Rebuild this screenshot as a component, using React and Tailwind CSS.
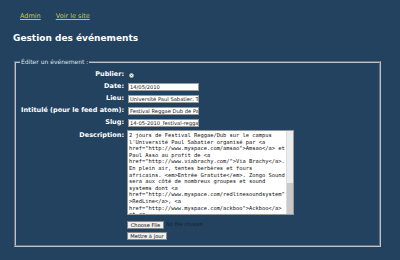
import React from 'react';

const rows = [
   { label: 'Date:', value: '14/05/2010' },
   { label: 'Lieu:', value: 'Université Paul Sabatier, Toulouse' },
   { label: 'Intitulé (pour le feed atom):', value: 'Festival Reggae Dub de Paul Asso' },
   { label: 'Slug:', value: '14-05-2010_festival-reggae-dub' },
];

const description = [
   '2 jours de Festival Reggae/Dub sur le campus',
   "l'Université Paul Sabatier organisé par <a",
   'href="http://www.myspace.com/amsao">Amsao</a> et',
   'Paul Asso au profit de <a',
   'href="http://www.viabrachy.com/">Via Brachy</a>.',
   'En plein air, tentes berbères et fours',
   'africains. <em>Entrée Gratuite</em>. Zongo Sound',
   'sera aux côté de nombreux groupes et sound',
   'systems dont <a',
   'href="http://www.myspace.com/redlinesoundsystem"',
   '>RedLine</a>, <a',
   'href="http://www.myspace.com/ackboo">Ackboo</a>',
   'et <a',
];

const App = () => {
   return (
      <div className="min-h-screen w-full bg-[#234260] font-['DejaVu_Sans',sans-serif] text-white">
         <div className="flex gap-[15px] pl-[20px] pt-[12px] text-[6.5px] leading-[8px]">
            <a href="#" className="text-[#c9c93a] underline">Admin</a>
            <a href="#" className="text-[#c9c93a] underline">Voir le site</a>
         </div>

         <h1 className="mt-[12px] pl-[13px] text-[9px] leading-[12px] font-bold">Gestion des événements</h1>

         <fieldset className="mt-[14px] ml-[14px] w-[367px] border-2 [border-style:groove] border-[#b9c3cd] pb-[5px]">
            <legend className="ml-[4px] px-[1px] text-[6px] leading-[8px] text-[#dde3e9]">Éditer un événement :</legend>

            <div className="flex flex-col pt-[3px]">
               <div className="flex h-[12px] items-center">
                  <span className="w-[108px] text-right text-[6.5px] font-bold">Publier:</span>
                  <span className="ml-[5px] flex h-[5px] w-[5px] items-center justify-center rounded-full border border-[#9aa] bg-[#f4f4f4]">
                     <span className="h-[1px] w-[1px] bg-[#666]" />
                  </span>
               </div>

               {rows.map(row => (
                  <div key={row.label} className="flex h-[12px] items-center">
                     <span className="w-[108px] text-right text-[6.5px] font-bold whitespace-nowrap">{row.label}</span>
                     <div className="ml-[4px] h-[8px] w-[71px] overflow-hidden border border-[#999] bg-white pl-[1px] text-[5.2px] leading-[6px] whitespace-nowrap text-[#222]">
                        {row.value}
                     </div>
                  </div>
               ))}

               <div className="mt-[1px] flex">
                  <span className="w-[108px] pt-[1px] text-right text-[6.5px] leading-[8px] font-bold">Description:</span>
                  <div className="ml-[3px] flex h-[85px] w-[167px] border border-[#999] bg-white">
                     <div className="flex-1 overflow-hidden pl-[1px] pt-[1px] font-['DejaVu_Sans_Mono',monospace] text-[5.4px] leading-[6.6px] text-[#111] whitespace-pre">
                        {description.join('\n')}
                     </div>
                     <div className="flex w-[7px] flex-col border-l border-[#ddd] bg-[#c9c9c9]">
                        <div className="h-[52px] bg-[#ececec]" />
                     </div>
                  </div>
               </div>

               <div className="mt-[6px] flex items-center pl-[111px]">
                  <button className="h-[8px] w-[37px] border border-[#888] bg-[#efefef] text-[5.2px] leading-[6px] text-[#111]">Choose File</button>
                  <span className="ml-[2px] text-[5.2px] text-[#0f2336]">No file chosen</span>
               </div>

               <div className="mt-[3px] flex pl-[111px]">
                  <button className="h-[8px] w-[40px] border border-[#888] bg-[#efefef] text-[5.2px] leading-[6px] text-[#111]">Mettre à jour</button>
               </div>
            </div>
         </fieldset>
      </div>
   );
};

export default App;
